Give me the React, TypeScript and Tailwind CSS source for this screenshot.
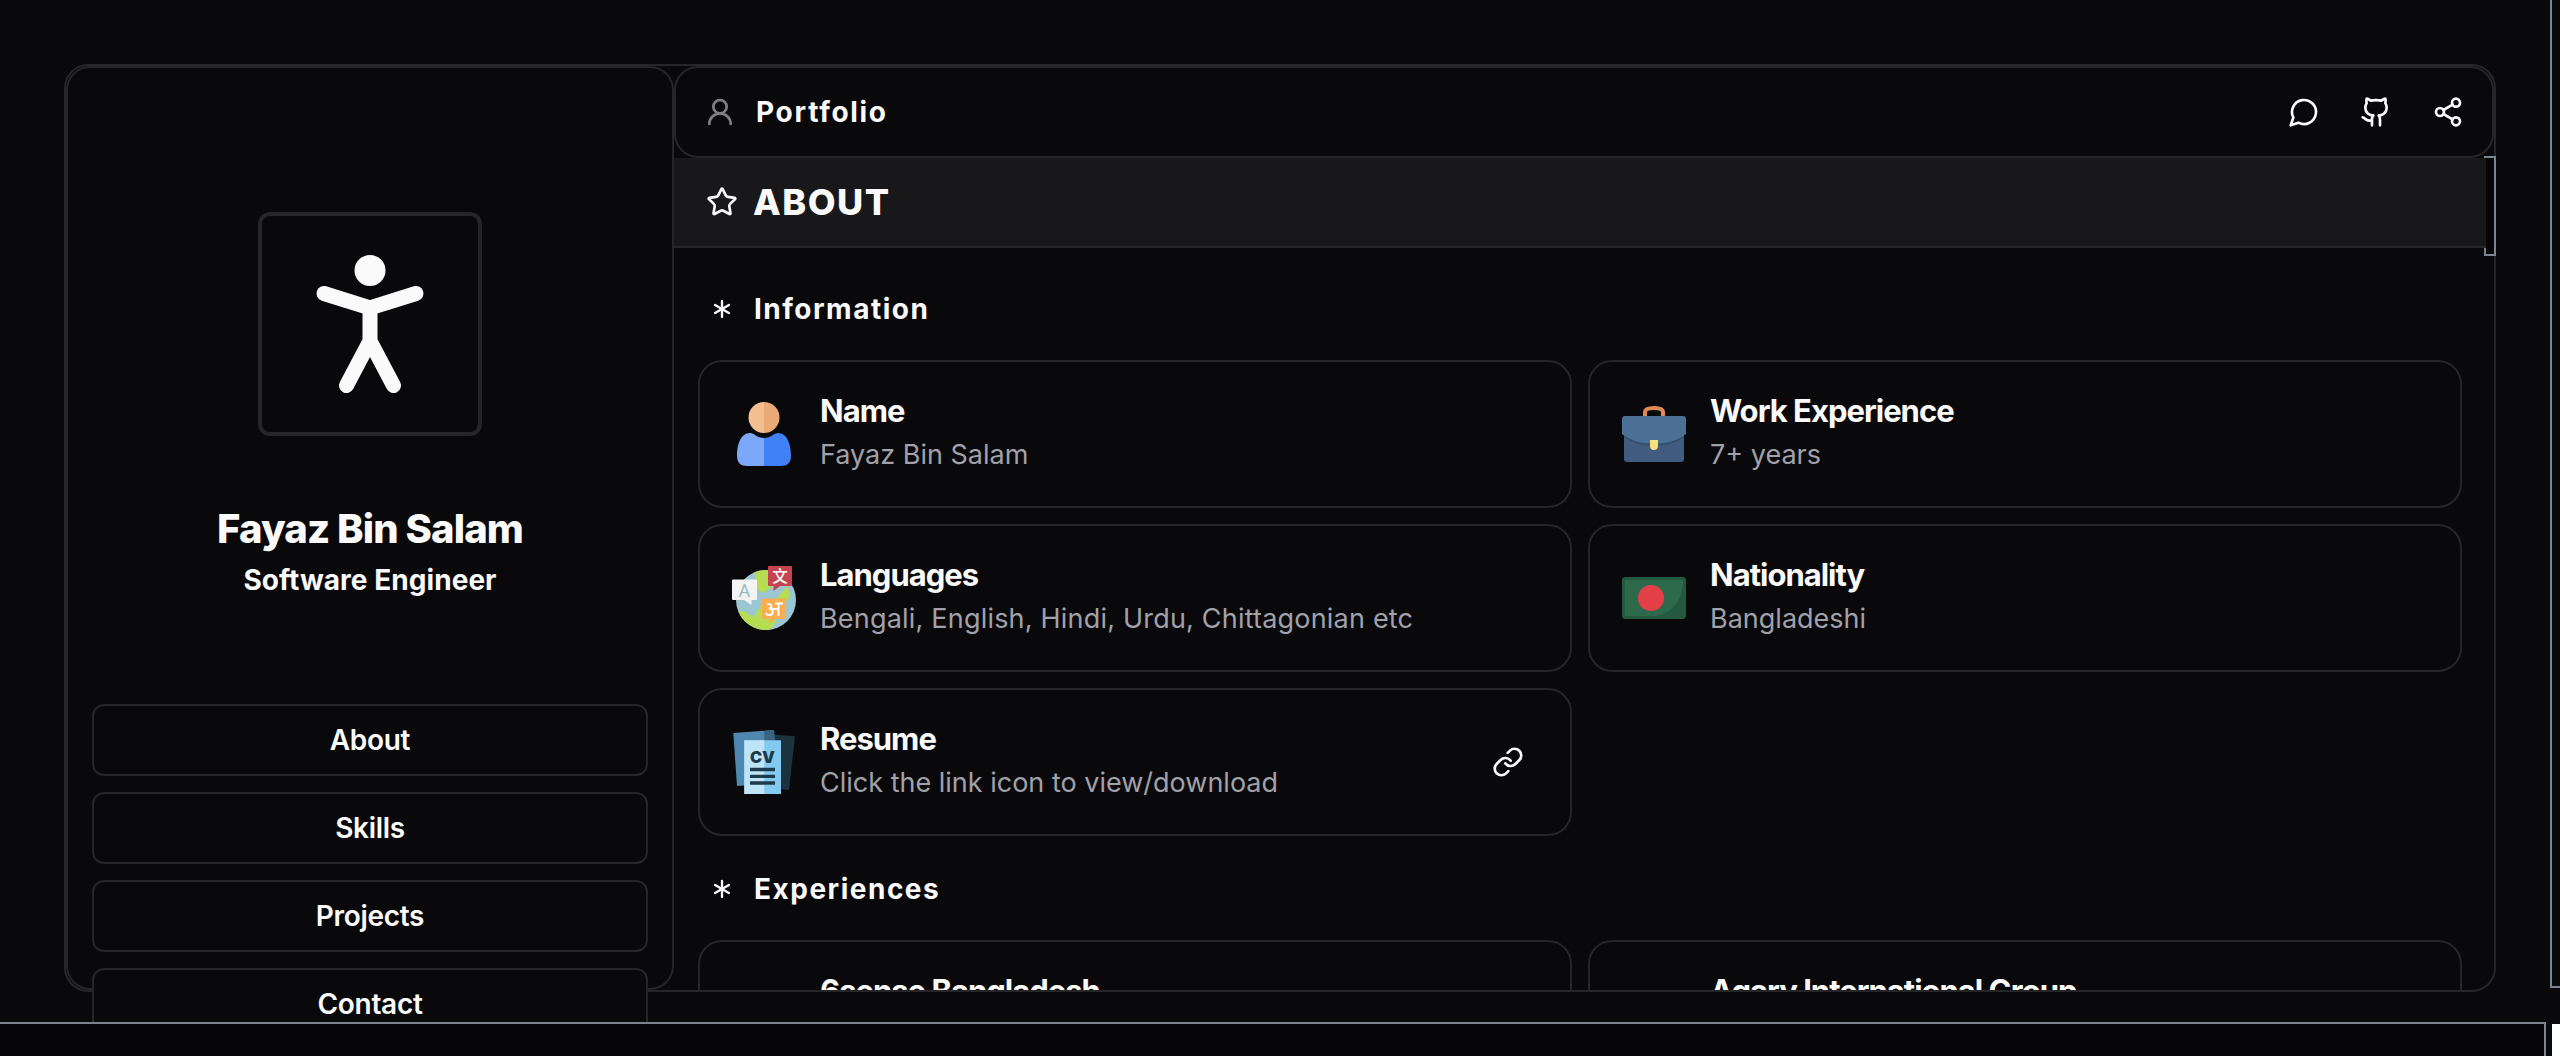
import React from "react";
import { Asterisk, Link, Share2, Star, UserRound } from "lucide-react";

const line = "border-[#262628]";

function PersonIcon() {
  return (
    <svg viewBox="0 0 64 64" className="size-16 shrink-0">
      <path d="M32 0a15.5 15.5 0 0 0 0 31z" fill="#f4bf90" />
      <path d="M32 0a15.5 15.5 0 0 1 0 31z" fill="#e9aa76" />
      <path d="M32 36c-7 0-10-5-14-5C9 31 5 42 5 54c0 7 4 10 10 10h17z" fill="#7ba8f8" />
      <path d="M32 36c7 0 10-5 14-5 9 0 13 11 13 23 0 7-4 10-10 10H32z" fill="#4280f8" />
    </svg>
  );
}

function BriefcaseIcon() {
  return (
    <svg viewBox="0 0 64 64" className="size-16 shrink-0">
      <path d="M23 15V10c0-3 4-4 9-4s9 1 9 4v5" fill="none" stroke="#df8a55" strokeWidth="4" />
      <path d="M2 24h60v33a3 3 0 0 1-3 3H5a3 3 0 0 1-3-3z" fill="#425c80" />
      <path d="M2 30v5c8 6 18 9 30 9s22-3 30-9v-5z" fill="#365170" />
      <path d="M3 14h58a3 3 0 0 1 3 3v15c-8 6.500-19 9.500-32 9.500S8 38.500 0 32V17a3 3 0 0 1 3-3z" fill="#4d7196" />
      <path d="M28 38h8v6c0 2.500-1.500 4-4 4s-4-1.500-4-4z" fill="#f5e07c" />
    </svg>
  );
}

function GlobeIcon() {
  return (
    <svg viewBox="0 0 64 64" className="size-16 shrink-0 overflow-visible">
      <defs>
        <clipPath id="globe">
          <circle cx="34" cy="34" r="30" />
        </clipPath>
      </defs>
      <g clipPath="url(#globe)">
        <rect width="64" height="64" fill="#9cc6d2" />
        <path d="M22 4h20v10l-3 8-8 5-6-4-1-9z" fill="#b5dc52" />
        <path d="M54 21c6 6 4 12-1 15l-8 6-8-2 8-8z" fill="#b5dc52" />
        <path d="M0 46l12-1 9 6 5-7 3-5 10 3 5 14-8 10H16z" fill="#b5dc52" />
      </g>
      <path d="M1 13.500h23a1 1 0 0 1 1 1v18.500a1 1 0 0 1-1 1h-4.500v5L12 34H1a1 1 0 0 1-1-1V14.500a1 1 0 0 1 1-1z" fill="#f3f3f3" />
      <text x="12.300" y="30.500" textAnchor="middle" fontSize="18" fontFamily="Roboto, sans-serif" fill="#8fc0c8">A</text>
      <path d="M37 0h22a1 1 0 0 1 1 1v18a1 1 0 0 1-1 1H48l-6.500 5V20H37a1 1 0 0 1-1-1V1a1 1 0 0 1 1-1z" fill="#c5444f" />
      <text x="48" y="15.800" textAnchor="middle" fontSize="15.500" fontWeight="500" fontFamily="Noto Sans CJK SC, sans-serif" fill="#fff">文</text>
      <path d="M31 32.500h22a1 1 0 0 1 1 1V52a1 1 0 0 1-1 1H43l-6 5v-5h-6a1 1 0 0 1-1-1V33.500a1 1 0 0 1 1-1z" fill="#f8ae51" />
      <g fill="none" stroke="#fff" strokeWidth="1.900">
        <path d="M35 38.500c4.500-1.500 6.500 3 2 4.200 5.500 0 4.500 6.800-.5 6.300-1.500-.2-2.300-1-2.500-2M38 43h8.500M46.500 37.500V50M43 37.500h8" />
      </g>
    </svg>
  );
}

function FlagIcon() {
  return (
    <svg viewBox="0 0 64 64" className="size-16 shrink-0">
      <rect y="11" width="64" height="42" rx="3.500" fill="#235a3f" />
      <path d="M3 14H58c2 0 3 0 3 2-1 17-9 30-26 34H3z" fill="#2d6a4c" />
      <circle cx="29" cy="32" r="13" fill="#e23f48" />
    </svg>
  );
}

function ResumeIcon() {
  return (
    <svg viewBox="0 0 64 64" className="size-16 shrink-0">
      <path d="M40 4.500l23 1.800L57 60l-17-1.500z" fill="#1c323f" />
      <path d="M1.300 3L42 0l3 53-40 3z" fill="#4e88b0" />
      <path d="M32.300.700L42 0l3 53H32.300z" fill="#386480" />
      <path d="M12.300 10.300H49V64H12.300z" fill="#84c9f0" />
      <path d="M12.300 10.300h20V64h-20z" fill="#bfe3f7" />
      <text x="30.500" y="33" textAnchor="middle" fontSize="16.500" fontWeight="900" fontFamily="Inter, sans-serif" textLength="25" lengthAdjust="spacingAndGlyphs" fill="#1d3a4a">CV</text>
      <path d="M18 39.500h25M18 46.300h25M18 53h25" stroke="#1d3a4a" strokeWidth="3.300" />
    </svg>
  );
}

interface CardProps {
  icon?: React.ReactNode;
  title: string;
  text?: string;
  link?: boolean;
  wide?: boolean;
}

function Card({ icon, title, text, link, wide }: CardProps) {
  return (
    <div className={`flex h-[148px] items-center gap-6 rounded-3xl border-2 px-8 ${line}`}>
      {icon ?? <div className="size-16 shrink-0" />}
      <div className="flex-1 whitespace-nowrap">
        <div className="text-[31px] leading-[44px] font-bold tracking-[-1px] text-[#fafafa]">{title}</div>
        <div className={`h-[46px] text-[27px] leading-[44px] text-[#a1a1aa] ${wide ? "tracking-[0.2px]" : ""}`}>{text}</div>
      </div>
      {link && <Link className="mr-3.5 size-8" />}
    </div>
  );
}

function SectionTitle({ children }: { children: React.ReactNode }) {
  return (
    <h2 className="flex h-[104px] items-center gap-4 pt-px pl-2 text-[28px] font-bold tracking-[1.5px]">
      <Asterisk className="size-8" strokeWidth={1.75} />
      {children}
    </h2>
  );
}

export default function App() {
  return (
    <div className="relative h-[1056px] w-[2560px] overflow-hidden bg-[#09090b] p-16 font-['Inter',sans-serif] text-[#fafafa]">
      <div className={`flex h-[928px] rounded-3xl border-2 ${line}`}>
        <aside className={`relative flex w-[608px] shrink-0 flex-col items-center rounded-3xl border-2 px-6 pt-36 ${line}`}>
          <div className={`flex size-56 shrink-0 items-center justify-center rounded-xl border-4 ${line}`}>
            <svg viewBox="258 212 224 224" className="size-56 shrink-0" fill="none" stroke="#fafafa" strokeWidth="15" strokeLinecap="round">
              <circle cx="370" cy="270.500" r="15.500" fill="#fafafa" stroke="none" />
              <path d="M324 293.500L370 308l46-14.500M370 308v33M346.500 385.500L370 341l23.500 44.500" />
            </svg>
          </div>
          <h1 className="mt-[66px] text-[40px] leading-[54px] font-extrabold tracking-[-0.9px]">Fayaz Bin Salam</h1>
          <p className="mt-1 text-[28px] leading-[40px] font-bold tracking-[0.05px]">Software Engineer</p>
          <nav className="mt-[104px] flex w-full flex-col gap-4">
            {["About", "Skills", "Projects", "Contact"].map((item) => (
              <button key={item} className={`h-[72px] shrink-0 rounded-xl border-2 bg-[#09090b] text-[28px] font-semibold tracking-[-0.3px] ${line}`}>
                {item}
              </button>
            ))}
          </nav>
        </aside>
        <main className="flex min-w-0 flex-1 flex-col overflow-hidden rounded-br-[22px]">
          <header className={`flex h-[92px] shrink-0 items-center rounded-3xl border-2 px-7 ${line}`}>
            <UserRound className="size-8 text-[#808080]" />
            <span className="ml-5 text-[28px] font-bold tracking-[1.7px]">Portfolio</span>
            <div className="ml-auto flex gap-10">
              <svg viewBox="0 0 24 24" className="size-8" fill="none" stroke="currentColor" strokeWidth="2" strokeLinecap="round" strokeLinejoin="round">
                <path d="M7.900 20A9 9 0 1 0 4 16.100L2 22Z" />
              </svg>
              <svg viewBox="0 0 24 24" className="size-8" fill="none" stroke="currentColor" strokeWidth="2" strokeLinecap="round" strokeLinejoin="round">
                <path d="M15 22v-4a4.800 4.800 0 0 0-1-3.500c3 0 6-2 6-5.500.08-1.250-.27-2.480-1-3.500.28-1.150.28-2.350 0-3.500 0 0-1 0-3 1.500-2.640-.5-5.360-.5-8 0C6 2 5 2 5 2c-.3 1.150-.3 2.350 0 3.500A5.403 5.403 0 0 0 4 9c0 3.500 3 5.500 6 5.500-.39.490-.68 1.050-.85 1.650-.17.600-.22 1.230-.15 1.850v4M9 18c-4.510 2-5-2-7-2" />
              </svg>
              <Share2 className="size-8" />
            </div>
          </header>
          <div className="mr-2 flex min-h-0 flex-1 flex-col overflow-hidden">
            <div className={`flex h-[90px] shrink-0 items-center gap-[15px] border-b-2 bg-[#18181a] pl-8 ${line}`}>
              <Star className="size-8" />
              <h1 className="text-[36px] font-extrabold tracking-[1.5px]">ABOUT</h1>
            </div>
            <div className="shrink-0 px-6 pt-2">
              <SectionTitle>Information</SectionTitle>
              <div className="grid grid-cols-2 gap-4">
                <Card icon={<PersonIcon />} title="Name" text="Fayaz Bin Salam" />
                <Card icon={<BriefcaseIcon />} title="Work Experience" text="7+ years" />
                <Card icon={<GlobeIcon />} title="Languages" text="Bengali, English, Hindi, Urdu, Chittagonian etc" wide />
                <Card icon={<FlagIcon />} title="Nationality" text="Bangladeshi" />
                <Card icon={<ResumeIcon />} title="Resume" text="Click the link icon to view/download" link />
              </div>
              <SectionTitle>Experiences</SectionTitle>
              <div className="grid grid-cols-2 gap-4">
                <Card title="6sense Bangladesh" />
                <Card title="Agary International Group" />
              </div>
            </div>
          </div>
        </main>
      </div>
      <div className="absolute top-[156px] left-[2484px] flex h-[100px] w-3 flex-col border-y-2 border-r-2 border-[#7b838f] pl-0.5">
        <div className="flex-1 bg-[#060608]" />
      </div>
      <div className="absolute top-[248px] left-[2484px] h-2 w-0.5 bg-[#7b838f]" />
      <div className="absolute -top-1 left-[2550px] h-[992px] w-5 border-2 border-[#7b838f]" />
      <div className="absolute top-[1022px] -left-1 h-10 w-[2550px] border-2 border-[#7b838f] bg-[#060608]" />
      <div className="absolute top-[1024px] left-[2552px] h-8 w-2 bg-white" />
    </div>
  );
}
